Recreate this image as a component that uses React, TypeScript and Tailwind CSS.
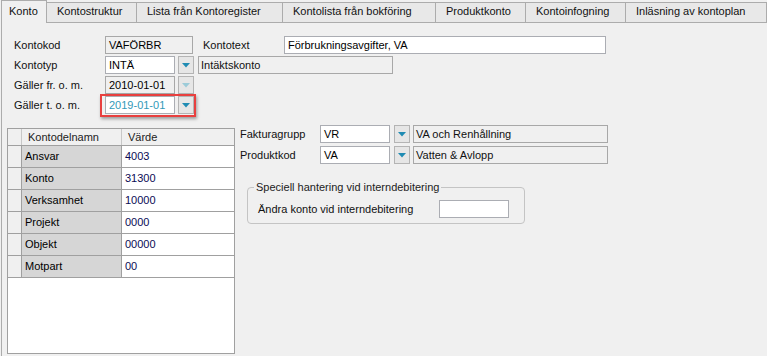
import React from "react";

const tabs = [
  { label: "Konto", w: "w-[46px]", active: true },
  { label: "Kontostruktur", w: "w-[90px]" },
  { label: "Lista från Kontoregister", w: "w-[146px]" },
  { label: "Kontolista från bokföring", w: "w-[153px]" },
  { label: "Produktkonto", w: "w-[90px]" },
  { label: "Kontoinfogning", w: "w-[100px]" },
  { label: "Inläsning av kontoplan", w: "flex-1" },
];

const rows = [
  { name: "Ansvar", value: "4003" },
  { name: "Konto", value: "31300" },
  { name: "Verksamhet", value: "10000" },
  { name: "Projekt", value: "0000" },
  { name: "Objekt", value: "00000" },
  { name: "Motpart", value: "00" },
];

// liten knapp med nedåtpil
function DropButton({ disabled }: { disabled?: boolean }) {
  return (
    <div className="w-[16px] h-[18px] border border-[#b4b4b4] bg-[#e6e6e6] flex items-center justify-center">
      <svg width="8" height="5" viewBox="0 0 8 5">
        <polygon points="0,0 8,0 4,4.5" fill={disabled ? "#9ccbd8" : "#1f8bb3"} />
      </svg>
    </div>
  );
}

function TextBox({
  value,
  w,
  readOnly,
  color,
}: {
  value: string;
  w: string;
  readOnly?: boolean;
  color?: string;
}) {
  return (
    <div
      className={`${w} h-[18px] border flex items-center px-[3px] whitespace-nowrap overflow-hidden ${
        readOnly ? "bg-[#f0f0f0] border-[#a8a8a8]" : "bg-white border-[#abadb3]"
      } ${color ?? "text-black"}`}
    >
      {value}
    </div>
  );
}

function InfoBox({ value, w }: { value: string; w: string }) {
  return (
    <div className={`${w} h-[18px] border border-[#a8a8a8] bg-[#f0f0f0] flex items-center pl-[2px] whitespace-nowrap`}>
      {value}
    </div>
  );
}

export default function App() {
  return (
    <div className="w-[767px] h-[356px] bg-[#f0f0f0] overflow-hidden font-['Liberation_Sans',Arial,sans-serif] text-[11px] text-[#111] leading-none">
      {/* flikar */}
      <div className="flex items-end h-[23px] pl-[1px]">
        {tabs.map((t) =>
          t.active ? (
            <div
              key={t.label}
              className={`${t.w} h-[23px] bg-[#f0f0f0] border-l border-t border-r border-[#acacac] flex items-center pl-[7px] pb-[1px]`}
            >
              {t.label}
            </div>
          ) : (
            <div
              key={t.label}
              className={`${t.w} h-[21px] bg-[#e8e8e8] border-t border-r border-b border-[#acacac] flex items-center pl-[10px] pb-[2px] whitespace-nowrap`}
            >
              {t.label}
            </div>
          )
        )}
      </div>

      <div className="border-l border-[#acacac] ml-[1px] h-[333px] flex flex-col">
        {/* övre formulär */}
        <div className="flex flex-col gap-[2px] pt-[13px] pl-[12px]">
          <div className="flex items-center">
            <div className="w-[91px]">Kontokod</div>
            <TextBox value="VAFÖRBR" w="w-[88px]" readOnly />
            <div className="w-[91px] pl-[10px]">Kontotext</div>
            <TextBox value="Förbrukningsavgifter, VA" w="w-[322px]" />
          </div>
          <div className="flex items-center">
            <div className="w-[91px]">Kontotyp</div>
            <TextBox value="INTÄ" w="w-[70px]" />
            <div className="ml-[3px]">
              <DropButton />
            </div>
            <div className="ml-[4px]">
              <InfoBox value="Intäktskonto" w="w-[195px]" />
            </div>
          </div>
          <div className="flex items-center">
            <div className="w-[91px]">Gäller fr. o. m.</div>
            <TextBox value="2010-01-01" w="w-[70px]" readOnly />
            <div className="ml-[3px]">
              <DropButton disabled />
            </div>
          </div>
          <div className="flex items-center">
            <div className="w-[91px]">Gäller t. o. m.</div>
            <div className="relative flex items-center">
              <TextBox value="2019-01-01" w="w-[70px]" color="text-[#3399b8]" />
              <div className="ml-[3px]">
                <DropButton />
              </div>
              <div className="absolute left-[-5px] right-[-2px] top-[-2px] bottom-[-3px] border-[2px] border-[#e8403f] shadow-[1px_2px_3px_rgba(0,0,0,0.35)]" />
            </div>
          </div>
        </div>

        {/* nedre del */}
        <div className="flex items-start mt-[11px] pl-[5px] gap-[5px]">
          {/* tabell */}
          <div className="mt-[3px] w-[228px] h-[226px] border border-[#a0a0a0] bg-white flex flex-col">
            <div className="flex h-[17px] bg-[#f0f0f0] border-b border-[#a0a0a0]">
              <div className="w-[14px] border-r border-[#c8c8c8]" />
              <div className="w-[100px] border-r border-[#c8c8c8] flex items-center pl-[6px] text-[#222]">
                Kontodelnamn
              </div>
              <div className="flex-1 flex items-center pl-[6px] text-[#222]">Värde</div>
            </div>
            {rows.map((r) => (
              <div key={r.name} className="flex h-[22px] border-b border-[#a0a0a0]">
                <div className="w-[14px] bg-[#f0f0f0] border-r border-[#a0a0a0]" />
                <div className="w-[100px] bg-[#d6d6d6] border-r border-[#a0a0a0] flex items-center pl-[3px] text-black">
                  {r.name}
                </div>
                <div className="flex-1 flex items-center pl-[3px] text-[#0b0b55]">{r.value}</div>
              </div>
            ))}
          </div>

          {/* höger del */}
          <div className="flex flex-col">
            <div className="flex flex-col gap-[3px]">
              <div className="flex items-center">
                <div className="w-[80px]">Fakturagrupp</div>
                <TextBox value="VR" w="w-[70px]" />
                <div className="ml-[4px]">
                  <DropButton />
                </div>
                <div className="ml-[3px]">
                  <InfoBox value="VA och Renhållning" w="w-[195px]" />
                </div>
              </div>
              <div className="flex items-center">
                <div className="w-[80px]">Produktkod</div>
                <TextBox value="VA" w="w-[70px]" />
                <div className="ml-[4px]">
                  <DropButton />
                </div>
                <div className="ml-[3px]">
                  <InfoBox value="Vatten & Avlopp" w="w-[195px]" />
                </div>
              </div>
            </div>

            <fieldset className="ml-[7px] mt-[16px] w-[278px] border border-[#c4c4c4] rounded-[4px] pb-[5px]">
              <legend className="ml-[6px] px-[2px] text-[#222] leading-[14px]">
                Speciell hantering vid interndebitering
              </legend>
              <div className="flex items-center mt-[6px] pl-[10px]">
                <div className="w-[181px]">Ändra konto vid interndebitering</div>
                <TextBox value="" w="w-[70px]" />
              </div>
            </fieldset>
          </div>
        </div>
      </div>
    </div>
  );
}
